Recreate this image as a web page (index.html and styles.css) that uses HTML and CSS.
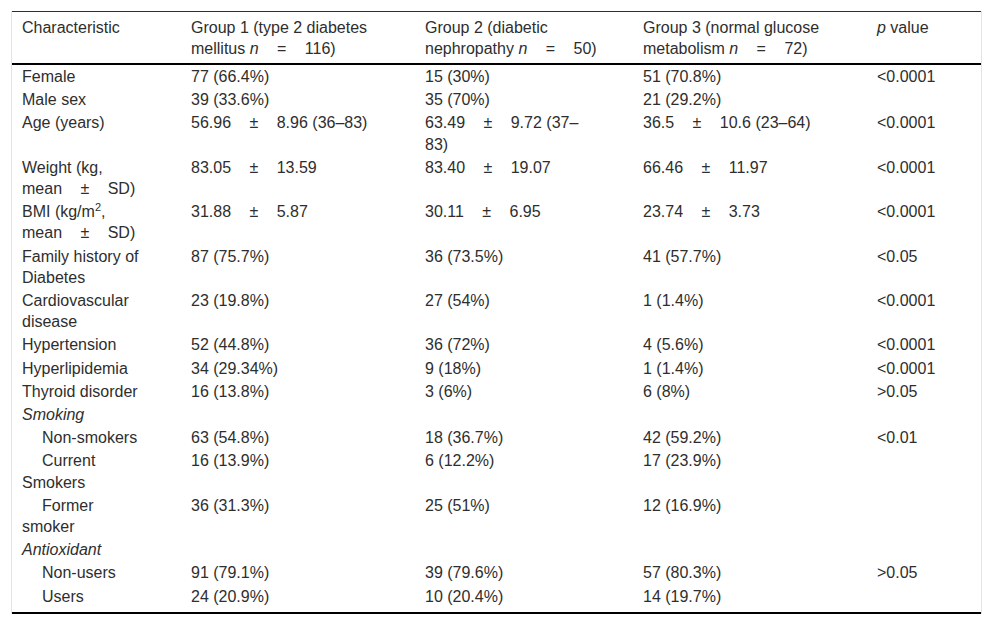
FILE: index.html
```html
<!DOCTYPE html>
<html lang="en">
<head>
<meta charset="utf-8">
<title>Table</title>
<link rel="stylesheet" href="styles.css">
</head>
<body>
<div class="frame">
<table class="data">
<colgroup>
<col class="c1"><col class="c2"><col class="c3"><col class="c4"><col class="c5">
</colgroup>
<thead>
<tr>
<th>Characteristic</th>
<th>Group 1 (type 2 diabetes mellitus <i>n</i> <span class="op">=</span> 116)</th>
<th>Group 2 (diabetic nephropathy <i>n</i> <span class="op">=</span> 50)</th>
<th>Group 3 (normal glucose metabolism <i>n</i> <span class="op">=</span> 72)</th>
<th><i>p</i> value</th>
</tr>
</thead>
<tbody>
<tr><td>Female</td><td>77 (66.4%)</td><td>15 (30%)</td><td>51 (70.8%)</td><td>&lt;0.0001</td></tr>
<tr><td>Male sex</td><td>39 (33.6%)</td><td>35 (70%)</td><td>21 (29.2%)</td><td></td></tr>
<tr><td>Age (years)</td><td>56.96 <span class="op">±</span> 8.96 (36–83)</td><td>63.49 <span class="op">±</span> 9.72 (37–83)</td><td>36.5 <span class="op">±</span> 10.6 (23–64)</td><td>&lt;0.0001</td></tr>
<tr><td>Weight (kg, mean <span class="op">±</span> SD)</td><td>83.05 <span class="op">±</span> 13.59</td><td>83.40 <span class="op">±</span> 19.07</td><td>66.46 <span class="op">±</span> 11.97</td><td>&lt;0.0001</td></tr>
<tr><td>BMI (kg/m<sup>2</sup>, mean <span class="op">±</span> SD)</td><td>31.88 <span class="op">±</span> 5.87</td><td>30.11 <span class="op">±</span> 6.95</td><td>23.74 <span class="op">±</span> 3.73</td><td>&lt;0.0001</td></tr>
<tr><td>Family history of Diabetes</td><td>87 (75.7%)</td><td>36 (73.5%)</td><td>41 (57.7%)</td><td>&lt;0.05</td></tr>
<tr><td>Cardiovascular disease</td><td>23 (19.8%)</td><td>27 (54%)</td><td>1 (1.4%)</td><td>&lt;0.0001</td></tr>
<tr><td>Hypertension</td><td>52 (44.8%)</td><td>36 (72%)</td><td>4 (5.6%)</td><td>&lt;0.0001</td></tr>
<tr><td>Hyperlipidemia</td><td>34 (29.34%)</td><td>9 (18%)</td><td>1 (1.4%)</td><td>&lt;0.0001</td></tr>
<tr><td>Thyroid disorder</td><td>16 (13.8%)</td><td>3 (6%)</td><td>6 (8%)</td><td>&gt;0.05</td></tr>
<tr><td class="group">Smoking</td><td></td><td></td><td></td><td></td></tr>
<tr><td class="sub">Non-smokers</td><td>63 (54.8%)</td><td>18 (36.7%)</td><td>42 (59.2%)</td><td>&lt;0.01</td></tr>
<tr><td class="sub">Current Smokers</td><td>16 (13.9%)</td><td>6 (12.2%)</td><td>17 (23.9%)</td><td></td></tr>
<tr><td class="sub">Former smoker</td><td>36 (31.3%)</td><td>25 (51%)</td><td>12 (16.9%)</td><td></td></tr>
<tr><td class="group">Antioxidant</td><td></td><td></td><td></td><td></td></tr>
<tr><td class="sub">Non-users</td><td>91 (79.1%)</td><td>39 (79.6%)</td><td>57 (80.3%)</td><td>&gt;0.05</td></tr>
<tr><td class="sub">Users</td><td>24 (20.9%)</td><td>10 (20.4%)</td><td>14 (19.7%)</td><td></td></tr>
</tbody>
</table>
</div>
</body>
</html>
```
FILE: styles.css
```css
html, body {
  margin: 0;
  padding: 0;
  background: #fff;
}
body {
  font-family: "Liberation Sans", Arial, sans-serif;
  font-size: 16px;
  color: #2e2e2e;
}
.frame {
  margin: 11px 10px 0 11px;
  border-left: 1px solid #e4e4e4;
  border-right: 1px solid #e4e4e4;
}
.data {
  width: 100%;
  border-collapse: collapse;
  table-layout: fixed;
  line-height: 21.2px;
}
.c1 { width: 169px; }
.c2 { width: 234px; }
.c3 { width: 218px; }
.c4 { width: 234px; }
.c5 { width: auto; }
.data thead th {
  font-weight: normal;
  text-align: left;
  vertical-align: top;
  line-height: 21px;
  padding: 5px 34px 4px 10px;
  border-top: 1px solid #2e2e2e;
  border-bottom: 2px solid #000;
}
.data td {
  vertical-align: top;
  padding: 1px 34px 1px 10px;
}
.data td:first-child {
  padding-right: 38px;
}
.data tbody tr:last-child td {
  border-bottom: 2px solid #000;
  padding-bottom: 5px;
}
.op {
  margin: 0 14px;
}
.group {
  font-style: italic;
}
.sub {
  text-indent: 20px;
}
sup {
  font-size: 11px;
  line-height: 0;
}
```
